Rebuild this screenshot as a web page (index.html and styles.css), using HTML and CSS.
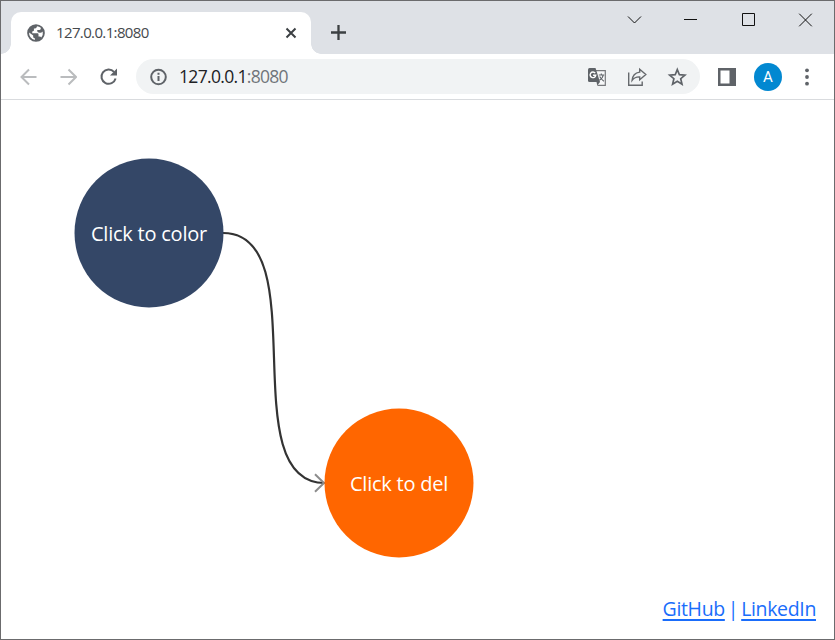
FILE: index.html
```html
<!DOCTYPE html>
<html lang="en">
<head>
<meta charset="utf-8">
<title>127.0.0.1:8080</title>
<link rel="stylesheet" href="styles.css">
</head>
<body>
<div class="window">
  <header class="tabstrip">
    <div class="tab">
      <svg class="globe" width="20" height="20" viewBox="0 0 24 24"><path fill="#5f6368" d="M12 1.4a10.6 10.6 0 1 0 0 21.2a10.6 10.6 0 0 0 0-21.2z"/><path fill="#fff" d="M13.2 3.8c-.2 2-1.500 2.800-3.700 2.800v2.200c0 1-.8 1.300-2 1.300v2.200h6c1 0 1.500.6 1.500 1.500v2.400h1.300c1 0 1.700.5 2 1.200a8.400 8.400 0 0 0 1.800-7.100c-1 1.200-2.500 1.700-4.100 1.500c-1.700-.2-2.500-1.200-2.500-2.400V8.500h2.600c1.500 0 1.700-1.600 1.700-2.700a8.600 8.600 0 0 0-4.600-2zM3.700 11.300a8.400 8.400 0 0 0 6.900 9v-1.900c-1.400 0-2-.9-2-2.100v-1.200z"/></svg>
      <span class="tab-title">127.0.0.1:8080</span>
      <svg class="tab-close" width="12" height="12" viewBox="0 0 12 12"><path d="M1.500 1.500l9 9M10.500 1.500l-9 9"/></svg>
    </div>
    <svg class="new-tab" width="16" height="16" viewBox="0 0 16 16"><path d="M8.500 1v15M1 8.500h15"/></svg>
    <div class="controls">
      <svg width="14" height="14" viewBox="0 0 14 14"><path d="M0 4.500l6.500 6.500L13 4.500"/></svg>
      <svg width="13" height="14" viewBox="0 0 13 14"><path d="M0 7.500h13"/></svg>
      <svg width="13" height="14" viewBox="0 0 13 14"><path d="M.5 1.500h12v12h-12z"/></svg>
      <svg width="14" height="14" viewBox="0 0 14 14"><path d="M.2 1.700l12.600 12.600M12.800 1.700L.2 14.300"/></svg>
    </div>
  </header>
  <nav class="toolbar">
    <svg class="nav muted" width="18" height="18" viewBox="0 0 18 18"><path d="M17.500 9H3M10 1.500L2.500 9L10 16.500"/></svg>
    <svg class="nav muted" width="18" height="18" viewBox="0 0 18 18"><path d="M1.500 9h15M9.500 1.500L17 9L9.500 16.500"/></svg>
    <svg class="nav" width="18" height="18" viewBox="0 0 18 18"><path d="M16.600 10.500A7.200 7.200 0 1 1 15 3.800"/><path class="solid" d="M18 .5v7h-7z"/></svg>
    <div class="address">
      <svg class="info" width="18" height="18" viewBox="0 0 18 18"><circle cx="9.500" cy="9" r="7.300"/><path d="M9.500 8v5M9.500 4.800v2"/></svg>
      <span class="url">127.0.0.1<span class="port">:8080</span></span>
      <svg class="translate" width="20" height="20" viewBox="0 0 20 20"><path d="M9 3.700h9.300v14.600H10.500" fill="#f7f8f9" stroke="#77797c" stroke-width="1.200"/><path fill="#5f6368" d="M2.500 1h6l4.500 14H2.500Q1 15 1 13.500v-11Q1 1 2.500 1z"/><path fill="#5f6368" d="M9.500 15H13l-2.700 3.500z"/><path d="M11.800 8h5.500M14.300 6.500V8M16.200 8c-.4 2.500-2 4.300-3.800 5.300M12.700 9.500c1 2 2.300 3.400 4.200 4.700" fill="none" stroke="#5f6368" stroke-width="1.100"/><path d="M8.200 6.200A2.800 2.800 0 1 0 8.700 8.300H6.100" fill="none" stroke="#fff" stroke-width="1.400"/></svg>
      <svg class="share" width="20" height="20" viewBox="0 0 20 20"><path d="M1.700 5.500v12.700h13.500v-3.700M12.700 2.300l6.100 5.200l-6.100 5.200V9.900c-3.300-.2-5.700.9-7.600 3.500c.3-4.500 2.900-7.600 7.600-8.300z"/></svg>
      <svg class="star" width="20" height="20" viewBox="0 0 20 20"><path d="M10.300 2.600l2.100 5.100l5.500.4l-4.200 3.600l1.300 5.400l-4.700-2.900l-4.700 2.900l1.300-5.400l-4.200-3.600l5.500-.4z"/></svg>
    </div>
    <svg class="panel" width="18" height="18" viewBox="0 0 18 18"><path fill="#5f6368" d="M0 0h18v18H0z"/><path fill="#fff" d="M2.500 2.500h9v13h-9z"/></svg>
    <span class="avatar">A</span>
    <svg class="menu" width="6" height="18" viewBox="0 0 6 18"><circle cx="3" cy="2.300" r="1.900"/><circle cx="3" cy="9" r="1.900"/><circle cx="3" cy="15.700" r="1.900"/></svg>
  </nav>
  <main class="canvas">
    <svg class="edges" width="833" height="539" viewBox="1 100 833 539">
      <path class="edge" d="M223 233C317 233 231 483 325 483"/><path class="arrow" d="M315 474.300L324 483L315 491.700"/>
      <circle cx="149" cy="233" r="74.500" fill="#344767"/>
      <circle cx="399" cy="483" r="74.500" fill="#f60"/>
    </svg>
    <div class="node node-color"><span>Click to color</span></div>
    <div class="node node-del"><span>Click to del</span></div>
    <footer class="links"><a href="#">GitHub</a><span class="bar">|</span><a href="#">LinkedIn</a></footer>
  </main>
</div>
</body>
</html>
```
FILE: styles.css
```css
* { box-sizing: border-box; }
body {
  margin: 0;
  font-family: "Open Sans", "Noto Sans", sans-serif;
  background: #fff;
}
svg { display: block; flex: none; }
.window {
  width: 835px;
  height: 640px;
  border: 1px solid #6b6b6d;
  display: flex;
  flex-direction: column;
  overflow: hidden;
}
.tabstrip {
  height: 53px;
  flex: none;
  display: flex;
  background: #dee1e6;
  padding-left: 10px;
}
.tab {
  position: relative;
  width: 300px;
  height: 42px;
  margin-top: 11px;
  padding: 0 14px 0 15px;
  display: flex;
  align-items: center;
  background: #fff;
  border-radius: 10px 10px 0 0;
}
.tab::before, .tab::after {
  content: "";
  position: absolute;
  bottom: 0;
  width: 10px;
  height: 10px;
}
.tab::before {
  left: -10px;
  background: radial-gradient(circle at 0 0, transparent 9.5px, #fff 10px);
}
.tab::after {
  right: -10px;
  background: radial-gradient(circle at 100% 0, transparent 9.5px, #fff 10px);
}
.tab-title {
  margin-left: 10px;
  margin-top: -2px;
  font-size: 15px;
  letter-spacing: -0.63px;
  color: #45494d;
  white-space: nowrap;
}
.tab-close { margin-left: auto; fill: none; stroke: #3c4043; stroke-width: 2; }
.new-tab { margin: 23px 0 0 19px; fill: none; stroke: #3c4043; stroke-width: 2.3; overflow: visible; }
.controls {
  margin: 11px 21px 0 auto;
  display: flex;
  gap: 44px;
}
.controls svg { fill: none; stroke: #111; stroke-width: 1; overflow: visible; }
.controls svg:nth-child(2) { margin-right: 1px; }
.controls svg:first-child { margin-right: -2px; }
.toolbar {
  height: 46px;
  flex: none;
  display: flex;
  align-items: center;
  border-bottom: 1px solid #d9dbde;
  padding-left: 18px;
}
.nav { margin-right: 22px; fill: none; stroke: #5f6368; stroke-width: 2; }
.nav.muted { stroke: #babcbe; }
.nav .solid { fill: #5f6368; stroke: none; }
.address {
  width: 564px;
  height: 35px;
  margin-left: -3px;
  padding: 0 13px;
  display: flex;
  align-items: center;
  background: #f1f3f4;
  border-radius: 18px;
}
.info { fill: none; stroke: #5f6368; stroke-width: 2; }
.url {
  margin-left: 12px;
  margin-top: -1px;
  font-size: 17.5px;
  letter-spacing: -0.68px;
  color: #202124;
  white-space: nowrap;
}
.port { color: #70757a; }
.translate { margin-left: auto; margin-right: 20px; }
.share { margin-right: 20px; fill: none; stroke: #66696d; stroke-width: 1.4; }
.star { fill: none; stroke: #5f6368; stroke-width: 1.7; }
.panel { margin-left: 18px; }
.avatar {
  width: 28px;
  height: 28px;
  margin-left: 18px;
  border-radius: 50%;
  background: #0288d1;
  color: #fff;
  font: 15px/29px Roboto, sans-serif;
  text-align: center;
}
.menu { margin-left: 22px; fill: #5f6368; }
.canvas { position: relative; flex: 1; }
.edges { position: absolute; inset: 0; }
.edge { fill: none; stroke: #333; stroke-width: 2.2; }
.arrow { fill: none; stroke: #8c8c8c; stroke-width: 2; }
.node {
  position: absolute;
  width: 149px;
  height: 149px;
  border-radius: 50%;
  display: flex;
  align-items: center;
  justify-content: center;
  color: #fff;
  font-size: 20px;
  letter-spacing: -0.23px;
  white-space: nowrap;
}
.node-color { left: 73.500px; top: 58.500px; }
.node-del { left: 323.500px; top: 308.500px; }
.links {
  position: absolute;
  right: 18px;
  bottom: 16px;
  font-size: 19.500px;
  line-height: 28px;
  letter-spacing: -0.35px;
  color: #1a73ff;
  white-space: nowrap;
}
.links a { color: #1a6dfb; text-underline-offset: 3px; text-decoration-thickness: 2px; }
.bar { margin: 0 3px; }
```
